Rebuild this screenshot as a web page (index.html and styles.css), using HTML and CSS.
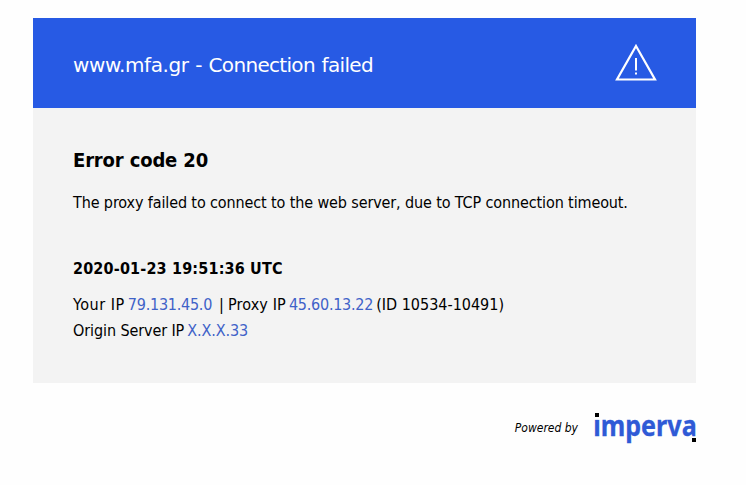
FILE: index.html
```html
<!DOCTYPE html>
<html lang="en">
  <head>
    <meta charset="utf-8" />
    <title>www.mfa.gr - Connection failed</title>
    <link rel="stylesheet" href="styles.css" />
  </head>
  <body>
    <div class="container">
      <div class="header">
        <h1><span class="host">www.mfa.gr</span> - Connection failed</h1>
        <svg class="warning" width="44" height="40" viewBox="0 0 44 40">
          <path d="M22 3 L41 36.5 H3 Z" fill="none" stroke="#fff" stroke-width="2.2" />
          <path d="M22 15 V27.5 M22 29.5 V31.5" stroke="#fff" stroke-width="2" />
        </svg>
      </div>
      <div class="content">
        <h2>Error code 20</h2>
        <p class="description">The proxy failed to connect to the web server, due to TCP connection timeout.</p>
        <h3>2020-01-23 19:51:36 UTC</h3>
        <p class="info">
          <span class="client">Your IP</span>
          <span class="ip">79.131.45.0</span>
          <span class="divider">|</span>
          <span class="proxy">Proxy IP</span>
          <span class="ip">45.60.13.22</span>
          <span class="id">(ID 10534-10491)</span>
        </p>
        <p class="info origin">
          <span>Origin Server IP</span>
          <span class="ip">X.X.X.33</span>
        </p>
      </div>
      <div class="footer">
        <span class="powered">Powered by</span>
        <svg class="logo" width="102" height="32" viewBox="0 0 102 32">
          <text x="-0.8" y="24.2" textLength="103.5" lengthAdjust="spacingAndGlyphs">imperva</text>
          <rect x="-1" y="-1" width="7" height="8.5" fill="#fefefe" />
          <rect x="1" y="1" width="4" height="4" />
          <rect x="98" y="26" width="4" height="4" />
        </svg>
      </div>
    </div>
  </body>
</html>
```

FILE: styles.css
```css
body {
  margin: 0;
  background-color: #fefefe;
  color: #000;
  font-family: Tahoma, "DejaVu Sans Condensed", "DejaVu Sans", sans-serif;
  font-size: 16px;
}
h1,
h2,
h3,
p {
  margin: 0;
  white-space: nowrap;
}
.container {
  width: 663px;
  margin: 18px 0 0 33px;
}
.header {
  display: flex;
  align-items: center;
  justify-content: space-between;
  height: 90px;
  padding: 0 38px 0 40px;
  box-sizing: border-box;
  background-color: #275ae4;
  color: #fff;
}
h1 {
  padding-top: 3px;
  font-family: "DejaVu Sans", sans-serif;
  font-size: 20px;
  font-weight: normal;
  letter-spacing: -0.68px;
  word-spacing: 1px;
}
.host {
  letter-spacing: -0.4px;
}
.content {
  height: 275px;
  padding: 39px 39px 0 40px;
  box-sizing: border-box;
  background-color: #f3f3f3;
}
h2 {
  font-size: 20px;
  line-height: 26px;
  letter-spacing: -0.15px;
}
.description {
  margin-top: 17px;
  line-height: 26px;
  letter-spacing: -0.12px;
}
h3 {
  margin-top: 40px;
  font-size: 16px;
  line-height: 26px;
  letter-spacing: 0.17px;
}
.info {
  display: flex;
  gap: 3px;
  margin-top: 10px;
  line-height: 26px;
}
.origin {
  margin-top: 0;
}
.origin span {
  letter-spacing: -0.1px;
}
.client {
  letter-spacing: 0.55px;
}
.proxy {
  letter-spacing: 0.15px;
}
.ip {
  color: #3f62c8;
  letter-spacing: -0.25px;
}
.divider {
  margin: 0 1px 0 4px;
}
.footer {
  display: flex;
  justify-content: flex-end;
  margin-top: 29px;
}
.powered {
  margin: 9px 16px 0 0;
  font-size: 12px;
  font-style: italic;
}
.logo {
  overflow: visible;
}
.logo text {
  fill: #2f5ad6;
  stroke: #2f5ad6;
  stroke-width: 0.3;
  font-family: "Noto Sans", sans-serif;
  font-size: 29px;
  font-weight: bold;
}
```
